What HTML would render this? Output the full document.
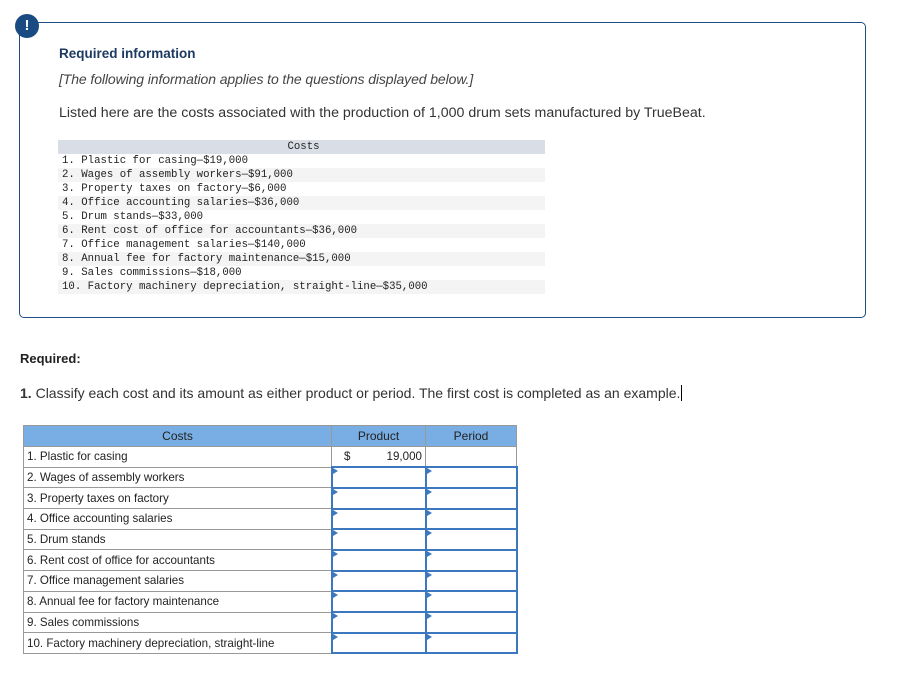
<!DOCTYPE html>
<html><head><meta charset="utf-8"><style>
body{margin:0;width:919px;height:691px;background:#fff;position:relative;font-family:"Liberation Sans",sans-serif;color:#333;overflow:hidden}
.box{position:absolute;left:19px;top:22px;width:847px;height:296px;border:1px solid #1f4e85;border-radius:0 5px 5px 5px;box-sizing:border-box}
.ico{position:absolute;left:15px;top:14px;width:24px;height:24px;border-radius:50%;background:#1a4a82;color:#fff;font-weight:bold;font-size:15px;text-align:center;line-height:24px}
.t{position:absolute;white-space:nowrap}
.mono{position:absolute;left:58px;top:140px;width:487px;font-family:"Liberation Mono",monospace;font-size:10.7px;color:#222}
.mono div{height:14px;line-height:14px;padding-left:4px}
.mono .h{background:#d9dde6;text-align:center}
.mono .a{background:#f4f4f4}
table{position:absolute;left:23px;top:425px;border-collapse:collapse;font-size:11.6px;color:#222;table-layout:fixed;width:493px}
td{border:1px solid #999;height:20.7px;padding:0 3px;box-sizing:border-box;white-space:nowrap}
th{background:#78aee3;border:1px solid #999;font-weight:normal;height:21px;font-size:12px;color:#222;box-sizing:border-box}
td.in{border:2px solid #3b78c0;position:relative}
td.in:before{content:"";position:absolute;left:0;top:0;border-left:5px solid #3b78c0;border-top:3px solid transparent;border-bottom:3px solid transparent}
</style></head><body>
<div class="box"></div>
<div class="ico">!</div>
<div class="t" style="left:59px;top:46px;font-size:13.5px;font-weight:bold;color:#1d3a60">Required information</div>
<div class="t" style="left:59px;top:71px;font-size:14px;font-style:italic;color:#444;letter-spacing:-0.1px">[The following information applies to the questions displayed below.]</div>
<div class="t" style="left:59px;top:105px;font-size:14.2px;color:#333">Listed here are the costs associated with the production of 1,000 drum sets manufactured by TrueBeat.</div>
<div class="mono">
<div class="h">Costs</div>
<div>1. Plastic for casing—$19,000</div>
<div class="a">2. Wages of assembly workers—$91,000</div>
<div>3. Property taxes on factory—$6,000</div>
<div class="a">4. Office accounting salaries—$36,000</div>
<div>5. Drum stands—$33,000</div>
<div class="a">6. Rent cost of office for accountants—$36,000</div>
<div>7. Office management salaries—$140,000</div>
<div class="a">8. Annual fee for factory maintenance—$15,000</div>
<div>9. Sales commissions—$18,000</div>
<div class="a">10. Factory machinery depreciation, straight-line—$35,000</div>
</div>
<div class="t" style="left:20px;top:351px;font-size:13px;font-weight:bold;color:#222">Required:</div>
<div class="t" style="left:20px;top:385px;font-size:14px;color:#333"><b>1.</b> Classify each cost and its amount as either product or period. The first cost is completed as an example.<span style="border-left:1px solid #000;margin-left:1px"></span></div>
<table>
<colgroup><col style="width:308px"><col style="width:94px"><col style="width:91px"></colgroup>
<tr><th>Costs</th><th>Product</th><th>Period</th></tr>
<tr><td>1. Plastic for casing</td><td style="text-align:right"><span style="float:left;padding-left:9px">$</span>19,000</td><td></td></tr>
<tr><td>2. Wages of assembly workers</td><td class="in"></td><td class="in"></td></tr>
<tr><td>3. Property taxes on factory</td><td class="in"></td><td class="in"></td></tr>
<tr><td>4. Office accounting salaries</td><td class="in"></td><td class="in"></td></tr>
<tr><td>5. Drum stands</td><td class="in"></td><td class="in"></td></tr>
<tr><td>6. Rent cost of office for accountants</td><td class="in"></td><td class="in"></td></tr>
<tr><td>7. Office management salaries</td><td class="in"></td><td class="in"></td></tr>
<tr><td>8. Annual fee for factory maintenance</td><td class="in"></td><td class="in"></td></tr>
<tr><td>9. Sales commissions</td><td class="in"></td><td class="in"></td></tr>
<tr><td>10. Factory machinery depreciation, straight-line</td><td class="in"></td><td class="in"></td></tr>
</table>
</body></html>
